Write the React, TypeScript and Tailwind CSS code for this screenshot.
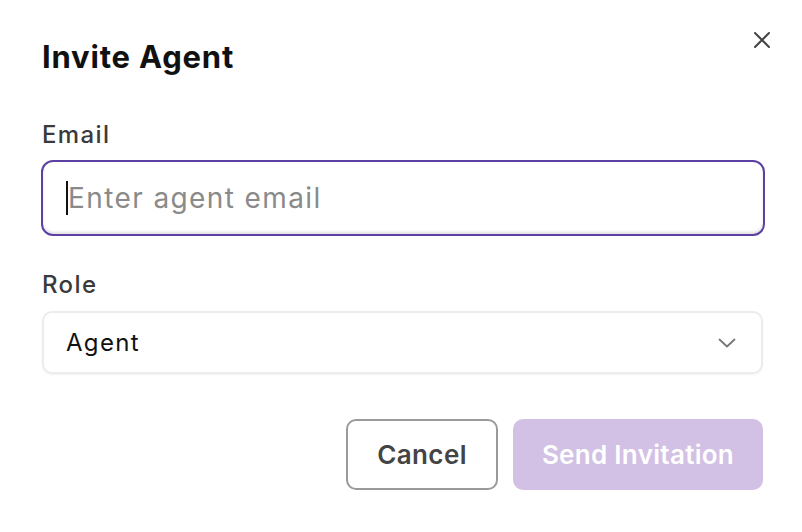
import React from 'react';

const font = { fontFamily: 'Inter, "Noto Sans", sans-serif' };

function CloseIcon({ className }: { className?: string }) {
  return (
    <svg viewBox="0 0 24 24" fill="none" stroke="currentColor" strokeWidth={2} strokeLinecap="round" className={className} aria-hidden>
      <path d="M5 5l14 14M19 5L5 19" />
    </svg>
  );
}

function ChevronDownIcon({ className }: { className?: string }) {
  return (
    <svg viewBox="0 0 24 24" fill="none" stroke="currentColor" strokeWidth={1.8} strokeLinecap="round" strokeLinejoin="round" className={className} aria-hidden>
      <path d="M4.5 8.5l7.5 7 7.5-7" />
    </svg>
  );
}

export default function App() {
  return (
    <div className="w-[802px] h-[532px] bg-white relative" style={font}>
      <button type="button" className="absolute top-[28px] left-[750px] w-6 h-6 text-[#444]" aria-label="Close">
        <CloseIcon className="w-6 h-6" />
      </button>

      <div className="pl-[42px] pr-[38px] pt-[38px]">
        <h2 className="text-[31px] leading-[38px] font-bold text-[#111] tracking-[0.8px]">Invite Agent</h2>

        <label className="block mt-[44px] text-[24px] leading-[30px] font-medium text-[#3a3a3a] tracking-[1.4px]">Email</label>
        <div className="mt-[10px] -ml-px -mr-px h-[76px] rounded-[12px] border-2 border-[#5e3fa3] shadow-[inset_0_-2px_3px_rgba(0,0,0,0.12)] flex items-center px-[23px]">
          <span className="w-[2px] h-[34px] bg-[#111]" />
          <span className="text-[28px] text-[#8a8a8a] tracking-[1.4px]">Enter agent email</span>
        </div>

        <label className="block mt-[34px] text-[24px] leading-[30px] font-medium text-[#3a3a3a] tracking-[1.4px]">Role</label>
        <div className="mt-[11px] mr-px h-[63px] rounded-[10px] border-2 border-[#ececec] shadow-[0_1px_2px_rgba(0,0,0,0.06)] flex items-center justify-between pl-[22px] pr-[22px]">
          <span className="text-[24px] text-[#111] tracking-[1.3px]">Agent</span>
          <ChevronDownIcon className="w-[24px] h-[24px] text-[#777]" />
        </div>

        <div className="mt-[45px] mr-px flex justify-end gap-[15px]">
          <button type="button" className="w-[152px] h-[71px] rounded-[10px] border-2 border-[#9a9a9a] text-[26px] font-semibold text-[#444] bg-white tracking-[0.4px]">
            Cancel
          </button>
          <button type="button" className="w-[250px] h-[71px] rounded-[10px] bg-[#d2c1e4] text-[26px] font-semibold text-white tracking-[0.3px]">
            Send Invitation
          </button>
        </div>
      </div>
    </div>
  );
}
